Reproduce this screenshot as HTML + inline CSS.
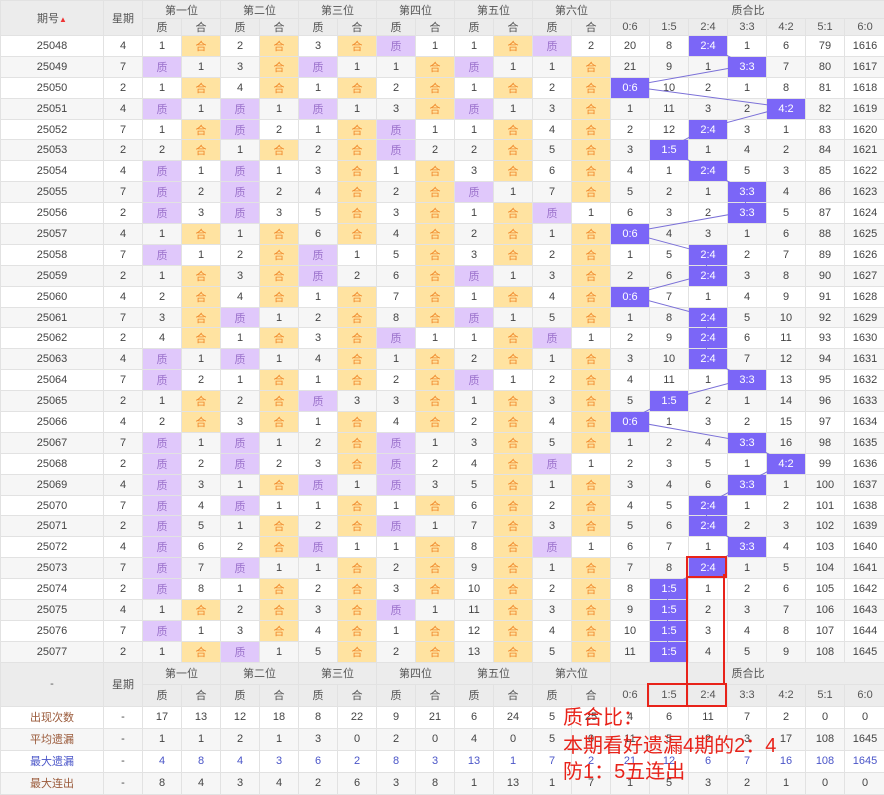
<!DOCTYPE html>
<html><head><meta charset="utf-8"><style>
body{margin:0;background:#fff;width:884px;height:793px;overflow:hidden;position:relative;font-family:"Liberation Sans","Noto Sans CJK SC",sans-serif;}
table{position:absolute;left:0;top:0;border-collapse:collapse;table-layout:fixed;width:884px;font-size:11px;color:#444;}
td,th{border:1px solid #e2e2e2;text-align:center;padding:0;font-weight:normal;overflow:hidden;white-space:nowrap}
thead th{background:#ececec;color:#555}
thead tr.a{height:18px} thead tr.b{height:16px}
tbody tr{height:20.9px}
tbody tr:nth-child(even) td{background:#f6f6f6}
tbody tr.s td{border-top:1px solid #bdbdbd}
.g{border-left:1px solid #c9c9c9}
td.q{background:#e0c8fb!important;color:#9b72cc}
td.h{background:#ffe3a1!important;color:#f0892a}
td.r{background:#7b66f7!important;color:#fff;position:relative;z-index:2}
tfoot td{height:21px}
tfoot tr.fh td{background:#ececec;color:#555;height:21px}
.lb{color:#9a5a3a}.bl{color:#4a55c8}
svg{position:absolute;left:0;top:0;z-index:1}
.red{position:absolute;color:#e8231a;font-size:20px;z-index:5;line-height:25px;left:563px}
.rb{position:absolute;border:2px solid #e8231a;z-index:6}
.rl{position:absolute;width:2px;background:#e8231a;z-index:6}
</style></head><body>
<table>
<colgroup><col style="width:103px"><col style="width:39px"><col span="12" style="width:39px"><col span="6" style="width:39px"><col style="width:41px"></colgroup>
<thead>
<tr class="a"><th rowspan="2">期号<span style="color:#e33;font-size:8px">▲</span></th><th rowspan="2" class="g">星期</th><th colspan="2" class="g">第一位</th><th colspan="2" class="g">第二位</th><th colspan="2" class="g">第三位</th><th colspan="2" class="g">第四位</th><th colspan="2" class="g">第五位</th><th colspan="2" class="g">第六位</th><th colspan="7" class="g">质合比</th></tr>
<tr class="b"><th class="g">质</th><th>合</th><th class="g">质</th><th>合</th><th class="g">质</th><th>合</th><th class="g">质</th><th>合</th><th class="g">质</th><th>合</th><th class="g">质</th><th>合</th><th class="g">0:6</th><th>1:5</th><th>2:4</th><th>3:3</th><th>4:2</th><th>5:1</th><th>6:0</th></tr>
</thead>
<tbody>
<tr><td>25048</td><td class="g">4</td><td class="g">1</td><td class="h">合</td><td class="g">2</td><td class="h">合</td><td class="g">3</td><td class="h">合</td><td class="q g">质</td><td>1</td><td class="g">1</td><td class="h">合</td><td class="q g">质</td><td>2</td><td class="g">20</td><td>8</td><td class="r">2:4</td><td>1</td><td>6</td><td>79</td><td>1616</td></tr>
<tr><td>25049</td><td class="g">7</td><td class="q g">质</td><td>1</td><td class="g">3</td><td class="h">合</td><td class="q g">质</td><td>1</td><td class="g">1</td><td class="h">合</td><td class="q g">质</td><td>1</td><td class="g">1</td><td class="h">合</td><td class="g">21</td><td>9</td><td>1</td><td class="r">3:3</td><td>7</td><td>80</td><td>1617</td></tr>
<tr><td>25050</td><td class="g">2</td><td class="g">1</td><td class="h">合</td><td class="g">4</td><td class="h">合</td><td class="g">1</td><td class="h">合</td><td class="g">2</td><td class="h">合</td><td class="g">1</td><td class="h">合</td><td class="g">2</td><td class="h">合</td><td class="r g">0:6</td><td>10</td><td>2</td><td>1</td><td>8</td><td>81</td><td>1618</td></tr>
<tr><td>25051</td><td class="g">4</td><td class="q g">质</td><td>1</td><td class="q g">质</td><td>1</td><td class="q g">质</td><td>1</td><td class="g">3</td><td class="h">合</td><td class="q g">质</td><td>1</td><td class="g">3</td><td class="h">合</td><td class="g">1</td><td>11</td><td>3</td><td>2</td><td class="r">4:2</td><td>82</td><td>1619</td></tr>
<tr><td>25052</td><td class="g">7</td><td class="g">1</td><td class="h">合</td><td class="q g">质</td><td>2</td><td class="g">1</td><td class="h">合</td><td class="q g">质</td><td>1</td><td class="g">1</td><td class="h">合</td><td class="g">4</td><td class="h">合</td><td class="g">2</td><td>12</td><td class="r">2:4</td><td>3</td><td>1</td><td>83</td><td>1620</td></tr>
<tr class="s"><td>25053</td><td class="g">2</td><td class="g">2</td><td class="h">合</td><td class="g">1</td><td class="h">合</td><td class="g">2</td><td class="h">合</td><td class="q g">质</td><td>2</td><td class="g">2</td><td class="h">合</td><td class="g">5</td><td class="h">合</td><td class="g">3</td><td class="r">1:5</td><td>1</td><td>4</td><td>2</td><td>84</td><td>1621</td></tr>
<tr><td>25054</td><td class="g">4</td><td class="q g">质</td><td>1</td><td class="q g">质</td><td>1</td><td class="g">3</td><td class="h">合</td><td class="g">1</td><td class="h">合</td><td class="g">3</td><td class="h">合</td><td class="g">6</td><td class="h">合</td><td class="g">4</td><td>1</td><td class="r">2:4</td><td>5</td><td>3</td><td>85</td><td>1622</td></tr>
<tr><td>25055</td><td class="g">7</td><td class="q g">质</td><td>2</td><td class="q g">质</td><td>2</td><td class="g">4</td><td class="h">合</td><td class="g">2</td><td class="h">合</td><td class="q g">质</td><td>1</td><td class="g">7</td><td class="h">合</td><td class="g">5</td><td>2</td><td>1</td><td class="r">3:3</td><td>4</td><td>86</td><td>1623</td></tr>
<tr><td>25056</td><td class="g">2</td><td class="q g">质</td><td>3</td><td class="q g">质</td><td>3</td><td class="g">5</td><td class="h">合</td><td class="g">3</td><td class="h">合</td><td class="g">1</td><td class="h">合</td><td class="q g">质</td><td>1</td><td class="g">6</td><td>3</td><td>2</td><td class="r">3:3</td><td>5</td><td>87</td><td>1624</td></tr>
<tr><td>25057</td><td class="g">4</td><td class="g">1</td><td class="h">合</td><td class="g">1</td><td class="h">合</td><td class="g">6</td><td class="h">合</td><td class="g">4</td><td class="h">合</td><td class="g">2</td><td class="h">合</td><td class="g">1</td><td class="h">合</td><td class="r g">0:6</td><td>4</td><td>3</td><td>1</td><td>6</td><td>88</td><td>1625</td></tr>
<tr class="s"><td>25058</td><td class="g">7</td><td class="q g">质</td><td>1</td><td class="g">2</td><td class="h">合</td><td class="q g">质</td><td>1</td><td class="g">5</td><td class="h">合</td><td class="g">3</td><td class="h">合</td><td class="g">2</td><td class="h">合</td><td class="g">1</td><td>5</td><td class="r">2:4</td><td>2</td><td>7</td><td>89</td><td>1626</td></tr>
<tr><td>25059</td><td class="g">2</td><td class="g">1</td><td class="h">合</td><td class="g">3</td><td class="h">合</td><td class="q g">质</td><td>2</td><td class="g">6</td><td class="h">合</td><td class="q g">质</td><td>1</td><td class="g">3</td><td class="h">合</td><td class="g">2</td><td>6</td><td class="r">2:4</td><td>3</td><td>8</td><td>90</td><td>1627</td></tr>
<tr><td>25060</td><td class="g">4</td><td class="g">2</td><td class="h">合</td><td class="g">4</td><td class="h">合</td><td class="g">1</td><td class="h">合</td><td class="g">7</td><td class="h">合</td><td class="g">1</td><td class="h">合</td><td class="g">4</td><td class="h">合</td><td class="r g">0:6</td><td>7</td><td>1</td><td>4</td><td>9</td><td>91</td><td>1628</td></tr>
<tr><td>25061</td><td class="g">7</td><td class="g">3</td><td class="h">合</td><td class="q g">质</td><td>1</td><td class="g">2</td><td class="h">合</td><td class="g">8</td><td class="h">合</td><td class="q g">质</td><td>1</td><td class="g">5</td><td class="h">合</td><td class="g">1</td><td>8</td><td class="r">2:4</td><td>5</td><td>10</td><td>92</td><td>1629</td></tr>
<tr><td>25062</td><td class="g">2</td><td class="g">4</td><td class="h">合</td><td class="g">1</td><td class="h">合</td><td class="g">3</td><td class="h">合</td><td class="q g">质</td><td>1</td><td class="g">1</td><td class="h">合</td><td class="q g">质</td><td>1</td><td class="g">2</td><td>9</td><td class="r">2:4</td><td>6</td><td>11</td><td>93</td><td>1630</td></tr>
<tr class="s"><td>25063</td><td class="g">4</td><td class="q g">质</td><td>1</td><td class="q g">质</td><td>1</td><td class="g">4</td><td class="h">合</td><td class="g">1</td><td class="h">合</td><td class="g">2</td><td class="h">合</td><td class="g">1</td><td class="h">合</td><td class="g">3</td><td>10</td><td class="r">2:4</td><td>7</td><td>12</td><td>94</td><td>1631</td></tr>
<tr><td>25064</td><td class="g">7</td><td class="q g">质</td><td>2</td><td class="g">1</td><td class="h">合</td><td class="g">1</td><td class="h">合</td><td class="g">2</td><td class="h">合</td><td class="q g">质</td><td>1</td><td class="g">2</td><td class="h">合</td><td class="g">4</td><td>11</td><td>1</td><td class="r">3:3</td><td>13</td><td>95</td><td>1632</td></tr>
<tr><td>25065</td><td class="g">2</td><td class="g">1</td><td class="h">合</td><td class="g">2</td><td class="h">合</td><td class="q g">质</td><td>3</td><td class="g">3</td><td class="h">合</td><td class="g">1</td><td class="h">合</td><td class="g">3</td><td class="h">合</td><td class="g">5</td><td class="r">1:5</td><td>2</td><td>1</td><td>14</td><td>96</td><td>1633</td></tr>
<tr><td>25066</td><td class="g">4</td><td class="g">2</td><td class="h">合</td><td class="g">3</td><td class="h">合</td><td class="g">1</td><td class="h">合</td><td class="g">4</td><td class="h">合</td><td class="g">2</td><td class="h">合</td><td class="g">4</td><td class="h">合</td><td class="r g">0:6</td><td>1</td><td>3</td><td>2</td><td>15</td><td>97</td><td>1634</td></tr>
<tr><td>25067</td><td class="g">7</td><td class="q g">质</td><td>1</td><td class="q g">质</td><td>1</td><td class="g">2</td><td class="h">合</td><td class="q g">质</td><td>1</td><td class="g">3</td><td class="h">合</td><td class="g">5</td><td class="h">合</td><td class="g">1</td><td>2</td><td>4</td><td class="r">3:3</td><td>16</td><td>98</td><td>1635</td></tr>
<tr class="s"><td>25068</td><td class="g">2</td><td class="q g">质</td><td>2</td><td class="q g">质</td><td>2</td><td class="g">3</td><td class="h">合</td><td class="q g">质</td><td>2</td><td class="g">4</td><td class="h">合</td><td class="q g">质</td><td>1</td><td class="g">2</td><td>3</td><td>5</td><td>1</td><td class="r">4:2</td><td>99</td><td>1636</td></tr>
<tr><td>25069</td><td class="g">4</td><td class="q g">质</td><td>3</td><td class="g">1</td><td class="h">合</td><td class="q g">质</td><td>1</td><td class="q g">质</td><td>3</td><td class="g">5</td><td class="h">合</td><td class="g">1</td><td class="h">合</td><td class="g">3</td><td>4</td><td>6</td><td class="r">3:3</td><td>1</td><td>100</td><td>1637</td></tr>
<tr><td>25070</td><td class="g">7</td><td class="q g">质</td><td>4</td><td class="q g">质</td><td>1</td><td class="g">1</td><td class="h">合</td><td class="g">1</td><td class="h">合</td><td class="g">6</td><td class="h">合</td><td class="g">2</td><td class="h">合</td><td class="g">4</td><td>5</td><td class="r">2:4</td><td>1</td><td>2</td><td>101</td><td>1638</td></tr>
<tr><td>25071</td><td class="g">2</td><td class="q g">质</td><td>5</td><td class="g">1</td><td class="h">合</td><td class="g">2</td><td class="h">合</td><td class="q g">质</td><td>1</td><td class="g">7</td><td class="h">合</td><td class="g">3</td><td class="h">合</td><td class="g">5</td><td>6</td><td class="r">2:4</td><td>2</td><td>3</td><td>102</td><td>1639</td></tr>
<tr><td>25072</td><td class="g">4</td><td class="q g">质</td><td>6</td><td class="g">2</td><td class="h">合</td><td class="q g">质</td><td>1</td><td class="g">1</td><td class="h">合</td><td class="g">8</td><td class="h">合</td><td class="q g">质</td><td>1</td><td class="g">6</td><td>7</td><td>1</td><td class="r">3:3</td><td>4</td><td>103</td><td>1640</td></tr>
<tr class="s"><td>25073</td><td class="g">7</td><td class="q g">质</td><td>7</td><td class="q g">质</td><td>1</td><td class="g">1</td><td class="h">合</td><td class="g">2</td><td class="h">合</td><td class="g">9</td><td class="h">合</td><td class="g">1</td><td class="h">合</td><td class="g">7</td><td>8</td><td class="r">2:4</td><td>1</td><td>5</td><td>104</td><td>1641</td></tr>
<tr><td>25074</td><td class="g">2</td><td class="q g">质</td><td>8</td><td class="g">1</td><td class="h">合</td><td class="g">2</td><td class="h">合</td><td class="g">3</td><td class="h">合</td><td class="g">10</td><td class="h">合</td><td class="g">2</td><td class="h">合</td><td class="g">8</td><td class="r">1:5</td><td>1</td><td>2</td><td>6</td><td>105</td><td>1642</td></tr>
<tr><td>25075</td><td class="g">4</td><td class="g">1</td><td class="h">合</td><td class="g">2</td><td class="h">合</td><td class="g">3</td><td class="h">合</td><td class="q g">质</td><td>1</td><td class="g">11</td><td class="h">合</td><td class="g">3</td><td class="h">合</td><td class="g">9</td><td class="r">1:5</td><td>2</td><td>3</td><td>7</td><td>106</td><td>1643</td></tr>
<tr><td>25076</td><td class="g">7</td><td class="q g">质</td><td>1</td><td class="g">3</td><td class="h">合</td><td class="g">4</td><td class="h">合</td><td class="g">1</td><td class="h">合</td><td class="g">12</td><td class="h">合</td><td class="g">4</td><td class="h">合</td><td class="g">10</td><td class="r">1:5</td><td>3</td><td>4</td><td>8</td><td>107</td><td>1644</td></tr>
<tr><td>25077</td><td class="g">2</td><td class="g">1</td><td class="h">合</td><td class="q g">质</td><td>1</td><td class="g">5</td><td class="h">合</td><td class="g">2</td><td class="h">合</td><td class="g">13</td><td class="h">合</td><td class="g">5</td><td class="h">合</td><td class="g">11</td><td class="r">1:5</td><td>4</td><td>5</td><td>9</td><td>108</td><td>1645</td></tr>
</tbody>
<tfoot>
<tr class="fh" style="border-top:1px solid #bdbdbd"><td rowspan="2">-</td><td rowspan="2" class="g">星期</td><td colspan="2" class="g">第一位</td><td colspan="2" class="g">第二位</td><td colspan="2" class="g">第三位</td><td colspan="2" class="g">第四位</td><td colspan="2" class="g">第五位</td><td colspan="2" class="g">第六位</td><td colspan="7" class="g">质合比</td></tr>
<tr class="fh"><td class="g">质</td><td>合</td><td class="g">质</td><td>合</td><td class="g">质</td><td>合</td><td class="g">质</td><td>合</td><td class="g">质</td><td>合</td><td class="g">质</td><td>合</td><td class="g">0:6</td><td>1:5</td><td>2:4</td><td>3:3</td><td>4:2</td><td>5:1</td><td>6:0</td></tr>
<tr><td class="lb">出现次数</td><td class="g">-</td><td class="g">17</td><td>13</td><td class="g">12</td><td>18</td><td class="g">8</td><td>22</td><td class="g">9</td><td>21</td><td class="g">6</td><td>24</td><td class="g">5</td><td>25</td><td class="g">4</td><td>6</td><td>11</td><td>7</td><td>2</td><td>0</td><td>0</td></tr>
<tr style="background:#f6f6f6"><td class="lb">平均遗漏</td><td class="g">-</td><td class="g">1</td><td>1</td><td class="g">2</td><td>1</td><td class="g">3</td><td>0</td><td class="g">2</td><td>0</td><td class="g">4</td><td>0</td><td class="g">5</td><td>0</td><td class="g">11</td><td>5</td><td>2</td><td>3</td><td>17</td><td>108</td><td>1645</td></tr>
<tr class="bl"><td class="bl">最大遗漏</td><td class="g" style="color:#444">-</td><td class="g">4</td><td>8</td><td class="g">4</td><td>3</td><td class="g">6</td><td>2</td><td class="g">8</td><td>3</td><td class="g">13</td><td>1</td><td class="g">7</td><td>2</td><td class="g">21</td><td>12</td><td>6</td><td>7</td><td>16</td><td>108</td><td>1645</td></tr>
<tr style="background:#f6f6f6"><td class="lb">最大连出</td><td class="g">-</td><td class="g">8</td><td>4</td><td class="g">3</td><td>4</td><td class="g">2</td><td>6</td><td class="g">3</td><td>8</td><td class="g">1</td><td>13</td><td class="g">1</td><td>7</td><td class="g">1</td><td>5</td><td>3</td><td>2</td><td>1</td><td>0</td><td>0</td></tr>
</tfoot>
</table>
<svg width="884" height="793"><polyline fill="none" stroke="#7b70d8" stroke-width="1" points="706.5,44.45 745.5,65.35 628.5,86.25 784.5,107.15 706.5,128.05 667.5,148.95 706.5,169.85 745.5,190.75 745.5,211.65 628.5,232.55 706.5,253.45 706.5,274.35 628.5,295.25 706.5,316.15 706.5,337.05 706.5,357.95 745.5,378.85 667.5,399.75 628.5,420.65 745.5,441.55 784.5,462.45 745.5,483.35 706.5,504.25 706.5,525.15 745.5,546.05 706.5,566.95 667.5,587.85 667.5,608.75 667.5,629.65 667.5,650.55"/></svg>
<div class="rb" style="left:686px;top:556px;width:37px;height:18px"></div>
<div class="rl" style="left:686px;top:574px;height:110px"></div>
<div class="rl" style="left:723px;top:574px;height:110px"></div>
<div class="rb" style="left:647px;top:683px;width:76px;height:20px"></div>
<div class="rl" style="left:686px;top:683px;height:22px"></div>
<div class="red" style="top:706px">质合比：</div>
<div class="red" style="top:734px">本期看好遗漏4期的2：4</div>
<div class="red" style="top:760px">防1：5五连出</div>
</body></html>
